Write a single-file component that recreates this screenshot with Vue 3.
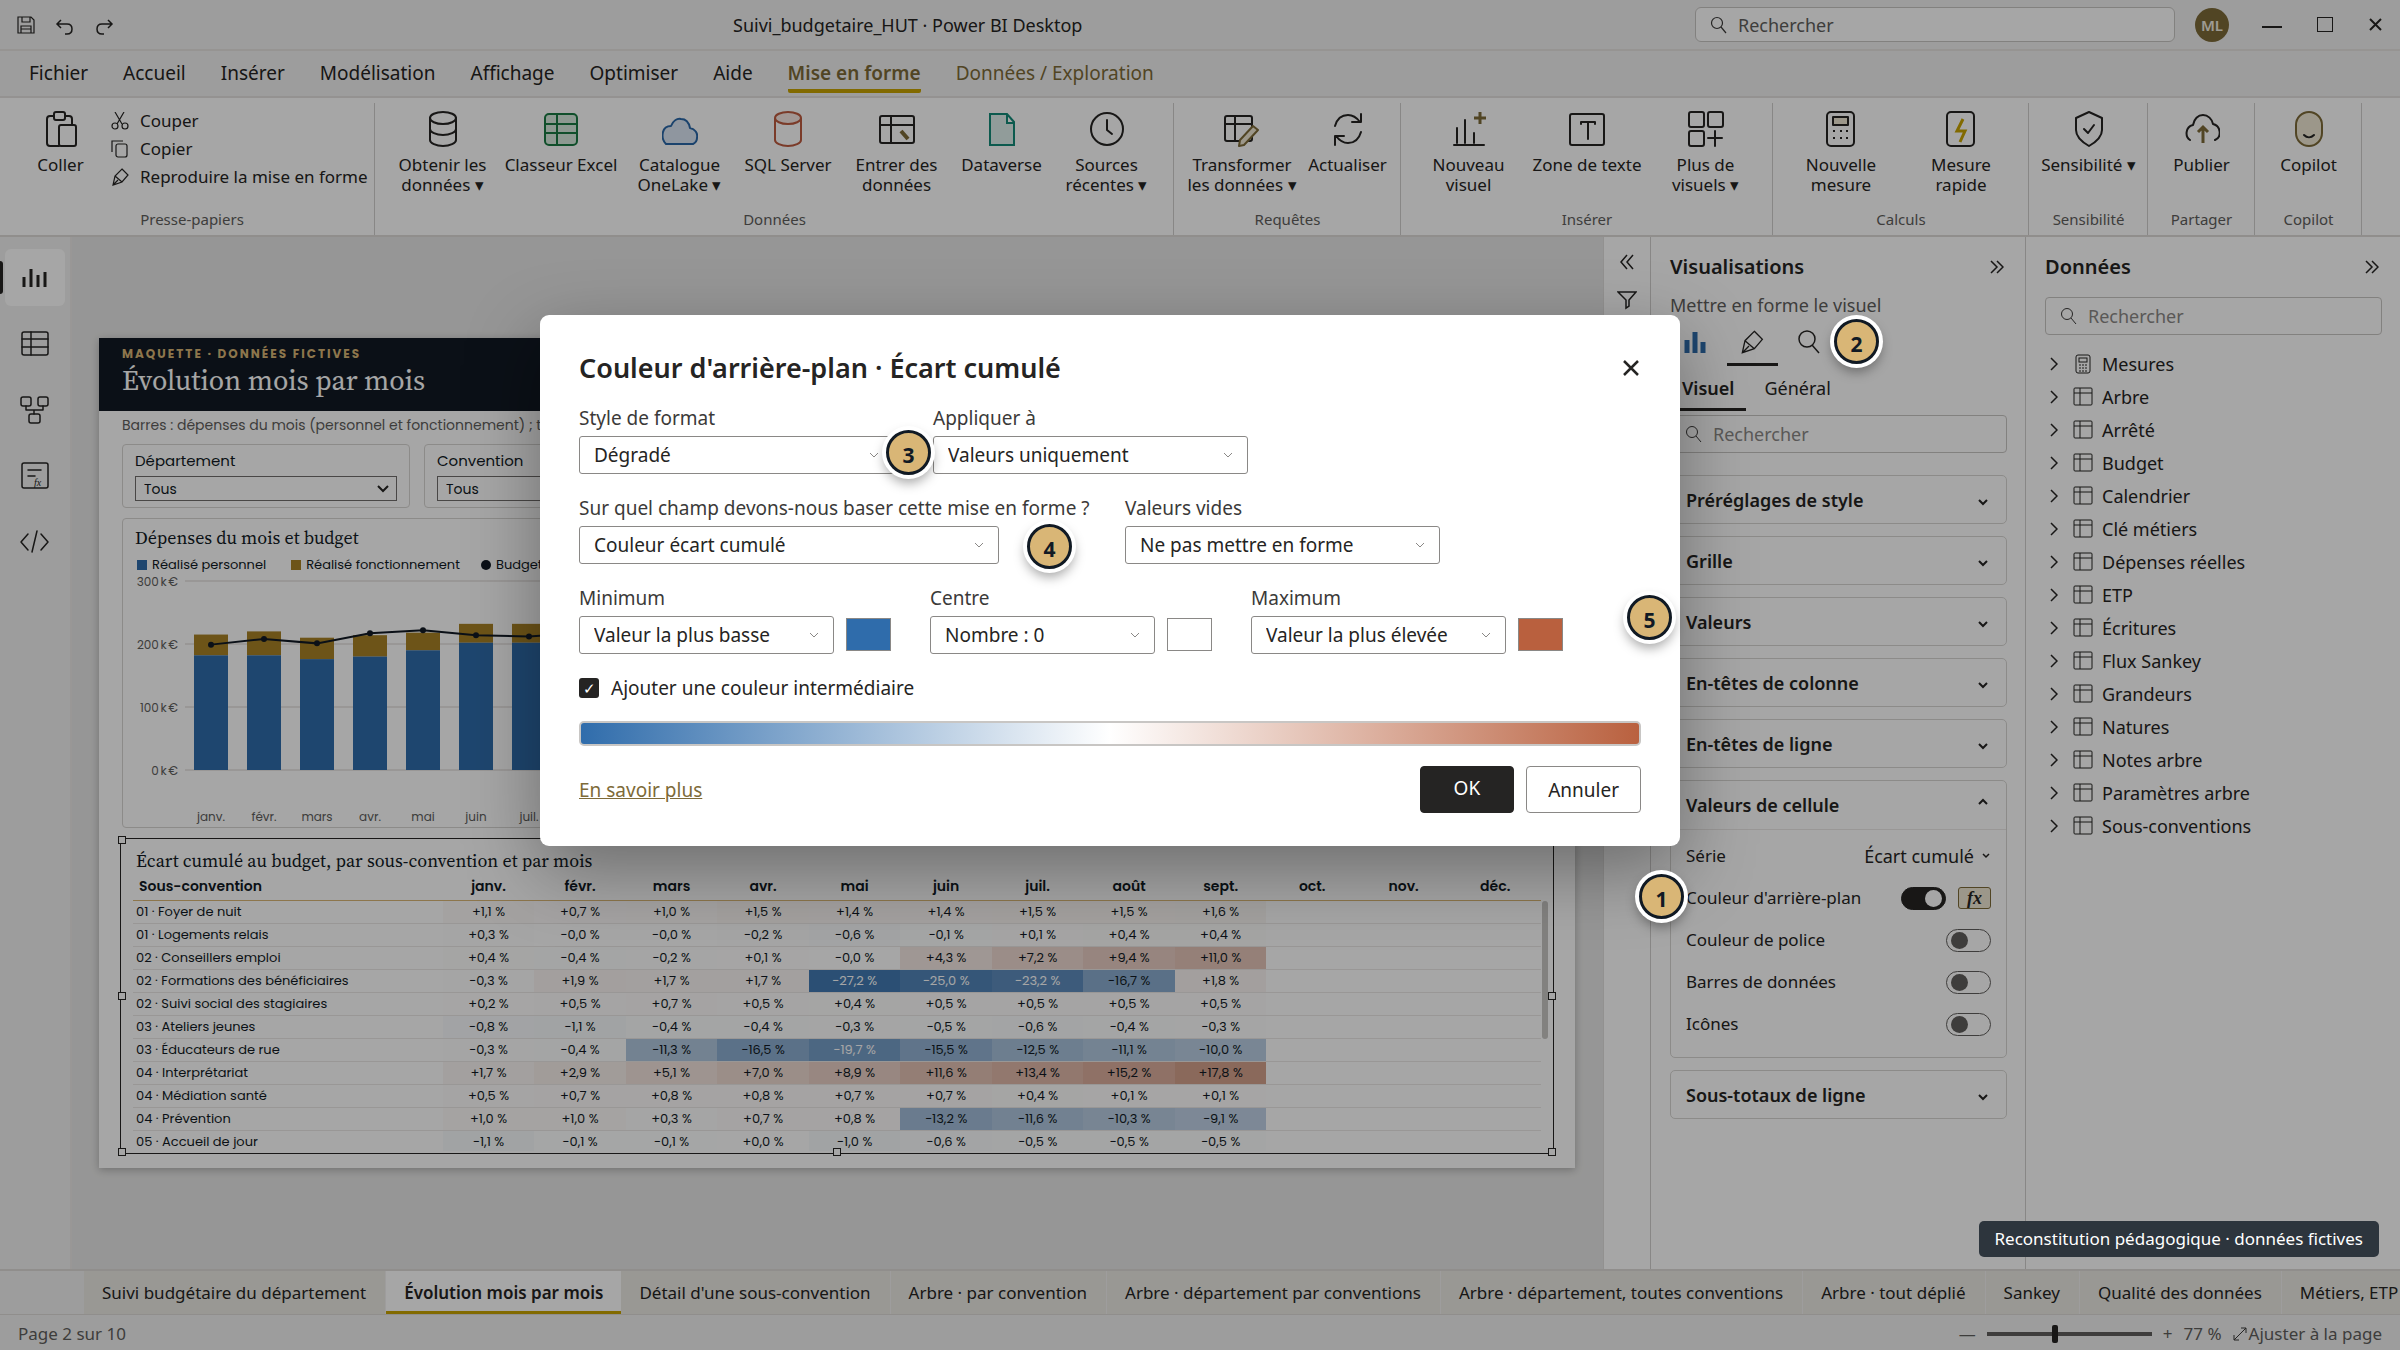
<script setup>
const menus = ['Fichier', 'Accueil', 'Insérer', 'Modélisation', 'Affichage', 'Optimiser', 'Aide']

const ink = 'stroke="#252423" stroke-width="2" fill="none" stroke-linejoin="round" stroke-linecap="round"'
const tableGlyph = `<g ${ink}><rect x="1" y="5" width="34" height="27" rx="2"/><path d="M1 14h34M12 5v27"/></g>`
const icons = {
  paste: `<g ${ink}><path d="M11 5H7a3 3 0 0 0-3 3v24a3 3 0 0 0 3 3h9M22 5h4a3 3 0 0 1 3 3v6"/><rect x="11" y="1" width="11" height="8" rx="2"/><rect x="16" y="14" width="17" height="21" rx="2"/></g>`,
  db: `<g ${ink}><ellipse cx="18" cy="7" rx="13" ry="6"/><path d="M5 7v22c0 3 6 6 13 6s13-3 13-6V7M5 18c0 3 6 6 13 6s13-3 13-6"/></g>`,
  excel: `<g stroke="#1a7a42" stroke-width="2" fill="none"><rect x="2" y="3" width="32" height="31" rx="4" fill="#d9ecdf"/><path d="M2 13h32M2 22h32M14 3v31"/></g>`,
  lake: `<path d="M5 33c-3-3-4-8-3-12s4-6 8-6c2-5 6-8 10-7 5 0 8 4 9 9 5 1 8 5 7 10 0 3-2 5-4 6z" transform="translate(-1 0)" stroke="#2a67a8" stroke-width="2" fill="#dce7f4" stroke-linejoin="round"/>`,
  sql: `<g stroke="#bd5b3f" stroke-width="2" fill="none"><path d="M5 7v22c0 3 6 6 13 6s13-3 13-6V7"/><ellipse cx="18" cy="7" rx="13" ry="6" fill="#f8e9e4"/></g>`,
  enter: `${tableGlyph}<path d="M22 20l7 8" stroke="#7d6a38" stroke-width="4"/>`,
  dataverse: `<path d="M6 3h17l7 8v23H6zM23 3v9h7" stroke="#138a78" stroke-width="2" fill="#dff0ed"/>`,
  clock: `<g ${ink}><circle cx="18" cy="18" r="16"/><path d="M18 9v10l5 4"/></g>`,
  transform: `<g ${ink}><rect x="1" y="5" width="27" height="25" rx="2"/><path d="M1 13h27M11 5v25"/></g><path d="M29 15l5 4-14 15-5 1 1-6z" stroke="#7d6a38" stroke-width="2" fill="#f0e9d4" stroke-linejoin="round"/>`,
  refresh: `<g ${ink}><path d="M5 15C7 8 12 4 18 4c5 0 9 3 12 7M31 3v8h-9M31 21c-2 7-7 11-13 11-5 0-9-3-12-7M5 34v-9h9"/></g>`,
  visual: `<g ${ink} stroke-linecap="butt"><path d="M3 34h30M6 17v15M14 9v23M23 22v10"/></g><path d="M29 1v12M23 7h12" stroke="#7d6a38" stroke-width="3"/>`,
  text: `<g ${ink}><rect x="1" y="3" width="34" height="31" rx="2"/><path d="M12 11h14M19 11v17M12 11v2M26 11v2"/></g>`,
  more: `<g ${ink}><rect x="1" y="1" width="15" height="15" rx="2"/><rect x="20" y="1" width="15" height="15" rx="2"/><rect x="1" y="20" width="15" height="15" rx="2"/><path d="M27 20v15M20 27h14"/></g>`,
  calc: `<g ${ink}><rect x="4" y="1" width="27" height="34" rx="4"/><rect x="10" y="6" width="15" height="8" fill="#f0e9d4"/></g><g fill="#252423"><path d="M10 19h2v2h-2zM17 19h2v2h-2zM23 19h2v2h-2zM10 26h2v2h-2zM17 26h2v2h-2zM23 26h2v2h-2z"/></g>`,
  quick: `<g ${ink}><rect x="4" y="1" width="27" height="34" rx="4"/></g><path d="M20 8l-6 12h8l-5 11" stroke="#c8a400" stroke-width="3" fill="none"/>`,
  shield: `<g ${ink}><path d="M18 1l13 6v12c0 7-6 12-13 16C11 31 5 26 5 19V7z"/><path d="M13 18l4 4 6-8"/></g>`,
  publish: `<g ${ink}><path d="M6 29c-5-3-5-13 3-15 1-6 5-10 10-10s9 4 10 9c8 2 9 13 2 16"/></g><path d="M19 32V16M14 21l5-5 5 5" stroke="#7d6a38" stroke-width="3" fill="none"/>`,
  copilot: `<rect x="5" y="1" width="26" height="34" rx="13" fill="#f0e9d4" stroke="#7d6a38" stroke-width="2"/><path d="M13 24c3 3 7 3 10 0" stroke="#252423" stroke-width="2" fill="none" stroke-linecap="round"/>`,
}

const groups = [
  { name: 'Données', items: [
    ['db', 'Obtenir les', 'données ▾'], ['excel', 'Classeur Excel', '', 'wide'], ['lake', 'Catalogue', 'OneLake ▾'],
    ['sql', 'SQL Server', '', 'mid'], ['enter', 'Entrer des', 'données'], ['dataverse', 'Dataverse', ''], ['clock', 'Sources', 'récentes ▾']] },
  { name: 'Requêtes', tight: true, items: [['transform', 'Transformer', 'les données ▾', 'large'], ['refresh', 'Actualiser', '', 'small']] },
  { name: 'Insérer', items: [['visual', 'Nouveau', 'visuel'], ['text', 'Zone de texte', '', 'wide'], ['more', 'Plus de', 'visuels ▾']] },
  { name: 'Calculs', tight: true, items: [['calc', 'Nouvelle', 'mesure', 'large'], ['quick', 'Mesure', 'rapide', 'large']] },
  { name: 'Sensibilité', tight: true, items: [['shield', 'Sensibilité ▾', '', 'fit']] },
  { name: 'Partager', tight: true, items: [['publish', 'Publier', '', 'small']] },
  { name: 'Copilot', tight: true, items: [['copilot', 'Copilot', '', 'small']] },
]

const thin = 'stroke="#252423" stroke-width="1.5" fill="none" stroke-linejoin="round" stroke-linecap="round"'
const rail = [
  ['Rapport', `<path d="M4 14v10M11 6v18M18 12v12M25 9v15" stroke="#252423" stroke-width="3"/>`],
  ['Table', `<g ${thin}><rect x="2" y="3" width="26" height="23" rx="2"/><path d="M2 10h26M2 18h26M11 3v23"/></g>`],
  ['Modèle', `<g ${thin}><rect x="1" y="2" width="10" height="9" rx="2"/><rect x="18" y="2" width="10" height="9" rx="2"/><rect x="9" y="19" width="11" height="9" rx="2"/><path d="M6 11v4h17v-4M14 15v4"/></g>`],
  ['DAX', `<g ${thin}><rect x="2" y="2" width="26" height="25" rx="2"/><path d="M8 9h13M8 15h7"/></g><text x="14" y="25" font-family="Liberation Serif" font-style="italic" font-size="10" fill="#252423">fx</text>`],
  ['TMDL', `<g ${thin}><path d="M8 7L1 15l7 8M21 7l7 8-7 8M17 4l-5 21"/></g>`],
]

const months = ['janv.', 'févr.', 'mars', 'avr.', 'mai', 'juin', 'juil.', 'août', 'sept.', 'oct.', 'nov.', 'déc.']
const staff = [182, 182, 176, 180, 190, 202, 202, 200, 198]
const total = [215, 220, 210, 214, 218, 232, 232, 226, 224]
const budget = [199, 208, 201, 217, 222, 214, 212, 218, 216]
const yOf = (v) => 198 - v * 0.63
const xOf = (i) => 76 + i * 53
const budgetLine = budget.map((v, i) => `${xOf(i)},${yOf(v)}`).join(' ')

const rows = [
  ['01 · Foyer de nuit', '+1,1 +0,7 +1,0 +1,5 +1,4 +1,4 +1,5 +1,5 +1,6'],
  ['01 · Logements relais', '+0,3 −0,0 −0,0 −0,2 −0,6 −0,1 +0,1 +0,4 +0,4'],
  ['02 · Conseillers emploi', '+0,4 −0,4 −0,2 +0,1 −0,0 +4,3 +7,2 +9,4 +11,0'],
  ['02 · Formations des bénéficiaires', '−0,3 +1,9 +1,7 +1,7 −27,2 −25,0 −23,2 −16,7 +1,8'],
  ['02 · Suivi social des stagiaires', '+0,2 +0,5 +0,7 +0,5 +0,4 +0,5 +0,5 +0,5 +0,5'],
  ['03 · Ateliers jeunes', '−0,8 −1,1 −0,4 −0,4 −0,3 −0,5 −0,6 −0,4 −0,3'],
  ['03 · Éducateurs de rue', '−0,3 −0,4 −11,3 −16,5 −19,7 −15,5 −12,5 −11,1 −10,0'],
  ['04 · Interprétariat', '+1,7 +2,9 +5,1 +7,0 +8,9 +11,6 +13,4 +15,2 +17,8'],
  ['04 · Médiation santé', '+0,5 +0,7 +0,8 +0,8 +0,7 +0,7 +0,4 +0,1 +0,1'],
  ['04 · Prévention', '+1,0 +1,0 +0,3 +0,7 +0,8 −13,2 −11,6 −10,3 −9,1'],
  ['05 · Accueil de jour', '−1,1 −0,1 −0,1 +0,0 −1,0 −0,6 −0,5 −0,5 −0,5'],
].map(([name, v]) => ({ name, cells: v.split(' ').map((t) => ({ text: t + ' %', value: parseFloat(t.replace('−', '-').replace(',', '.')) })) }))

const low = [47, 108, 171]
const high = [185, 96, 62]
function cellStyle(v) {
  const end = v < 0 ? low : high
  const f = Math.min(1, Math.abs(v) / 30)
  return { background: `rgb(${end.map((c) => Math.round(255 + (c - 255) * f)).join(',')})`, color: v < -18 ? '#fff' : '#111a24' }
}

const sections = ['Préréglages de style', 'Grille', 'Valeurs', 'En-têtes de colonne', 'En-têtes de ligne']
const switches = ['Couleur de police', 'Barres de données', 'Icônes']
const tables = ['Mesures', 'Arbre', 'Arrêté', 'Budget', 'Calendrier', 'Clé métiers', 'Dépenses réelles', 'ETP', 'Écritures', 'Flux Sankey', 'Grandeurs', 'Natures', 'Notes arbre', 'Paramètres arbre', 'Sous-conventions']
const pages = ['Suivi budgétaire du département', 'Évolution mois par mois', "Détail d'une sous-convention", 'Arbre · par convention', 'Arbre · département par conventions', 'Arbre · département, toutes conventions', 'Arbre · tout déplié', 'Sankey', 'Qualité des données', 'Métiers, ETP']
const pins = [
  { n: 1, x: 1662, y: 897 }, { n: 2, x: 1857, y: 342 }, { n: 3, x: 909, y: 453 }, { n: 4, x: 1050, y: 547 }, { n: 5, x: 1650, y: 618 },
]
</script>

<template>
  <div class="app">
    <header class="titlebar">
      <div class="quick">
        <button type="button" aria-label="Enregistrer"><svg width="20" height="20" viewBox="0 0 20 20" fill="none" stroke="#252423" stroke-width="1.2"><path d="M2 2h13l3 3v13H2zM6 2v5h8V2M5 18v-7h10v7M5 14h10" /></svg></button>
        <button type="button" aria-label="Annuler la saisie"><svg width="20" height="20" viewBox="0 0 20 20" fill="none" stroke="#252423" stroke-width="1.5"><path d="M6 5L2 9l4 4M2 9h10c3 0 5 2 5 5s-2 5-5 5h-2" /></svg></button>
        <button type="button" aria-label="Rétablir"><svg width="20" height="20" viewBox="0 0 20 20" fill="none" stroke="#252423" stroke-width="1.5"><path d="M14 5l4 4-4 4M18 9H8c-3 0-5 2-5 5s2 5 5 5h2" /></svg></button>
      </div>
      <div class="doc">Suivi_budgetaire_HUT · Power BI Desktop</div>
      <div class="window">
        <label class="search top"><svg width="18" height="18" viewBox="0 0 18 18" fill="none" stroke="#3b3a39" stroke-width="1.2"><circle cx="7" cy="7" r="5.5" /><path d="M11 11l5 6" /></svg><input type="search" placeholder="Rechercher" aria-label="Rechercher" /></label>
        <span class="avatar">ML</span>
        <button type="button" aria-label="Réduire"><svg width="20" height="20"><path d="M0 12h20" stroke="#252423" stroke-width="2" /></svg></button>
        <button type="button" aria-label="Agrandir"><svg width="18" height="18"><rect x="1.5" y="1.5" width="15" height="14" fill="none" stroke="#252423" /></svg></button>
        <button type="button" aria-label="Quitter"><svg width="16" height="16"><path d="M2 2l11 11M13 2L2 13" stroke="#252423" stroke-width="2" /></svg></button>
      </div>
    </header>

    <nav class="menu">
      <a v-for="m in menus" :key="m" href="#">{{ m }}</a>
      <a href="#" class="context on">Mise en forme</a>
      <a href="#" class="context">Données / Exploration</a>
    </nav>

    <section class="ribbon">
      <div class="group clipboard">
        <div class="tools">
          <button type="button" class="tool paste"><svg width="36" height="36" viewBox="0 0 36 36" v-html="icons.paste"></svg><span>Coller</span></button>
          <div class="stack">
            <button type="button"><svg width="18" height="18" viewBox="0 0 18 18" fill="none" stroke="#252423" stroke-width="1.2"><path d="M4 0l7 12M13 0L6 12" /><circle cx="4" cy="14" r="3" /><circle cx="14" cy="14" r="3" /></svg>Couper</button>
            <button type="button"><svg width="18" height="18" viewBox="0 0 18 18" fill="none" stroke="#252423" stroke-width="1.2"><path d="M1 12V1h11" /><rect x="5" y="4" width="11" height="13" rx="2" /></svg>Copier</button>
            <button type="button"><svg width="18" height="18" viewBox="0 0 18 18" fill="none" stroke="#252423" stroke-width="1.2"><path d="M11 1l6 6-6 7-9 3L4 8zM2 17l5-5M4 8l7 6" /></svg>Reproduire la mise en forme</button>
          </div>
        </div>
        <div class="caption">Presse-papiers</div>
      </div>
      <div v-for="g in groups" :key="g.name" class="group" :class="{ tight: g.tight }">
        <div class="tools">
          <button v-for="t in g.items" :key="t[1]" type="button" class="tool" :class="t[3]">
            <svg width="36" height="36" viewBox="0 0 36 36" v-html="icons[t[0]]"></svg>
            <span>{{ t[1] }}</span><span v-if="t[2]">{{ t[2] }}</span>
          </button>
        </div>
        <div class="caption">{{ g.name }}</div>
      </div>
    </section>

    <main class="work">
      <nav class="rail">
        <button v-for="(r, i) in rail" :key="r[0]" type="button" :class="{ on: i === 0 }" :aria-label="r[0]"><svg width="30" height="30" viewBox="0 0 30 30" v-html="r[1]"></svg></button>
      </nav>

      <div class="canvas">
        <article class="report">
          <header class="band">
            <div class="eyebrow">MAQUETTE · DONNÉES FICTIVES</div>
            <h1>Évolution mois par mois</h1>
          </header>
          <div class="content">
            <p class="sub">Barres : dépenses du mois (personnel et fonctionnement) ; trait</p>
            <div class="slicers">
              <label v-for="s in ['Département', 'Convention']" :key="s" class="slicer">{{ s }}
                <span class="pick"><select><option>Tous</option></select><svg width="12" height="8" viewBox="0 0 12 8"><path d="M1 1l5 5 5-5" fill="none" stroke="#252423" stroke-width="2" /></svg></span>
              </label>
            </div>
            <section class="chart">
              <h2>Dépenses du mois et budget</h2>
              <div class="legend"><span class="k blue"></span>Réalisé personnel<span class="k gold"></span>Réalisé fonctionnement<span class="k dot"></span>Budget</div>
              <svg class="plot" width="686" height="254">
                <g v-for="t in [300, 200, 100, 0]" :key="t">
                  <path :d="`M50 ${yOf(t)}H686`" stroke="#ebe9e6" stroke-width="2" />
                  <text x="43" :y="yOf(t) + 5" text-anchor="end">{{ t }}&#8239;k&#8239;€</text>
                </g>
                <g v-for="(v, i) in staff" :key="i">
                  <rect :x="xOf(i) - 17" :y="yOf(total[i])" width="34" :height="(total[i] - v) * 0.63" fill="#a88226" />
                  <rect :x="xOf(i) - 17" :y="yOf(v)" width="34" :height="v * 0.63" fill="#2f6cab" />
                </g>
                <polyline :points="budgetLine" fill="none" stroke="#111a24" stroke-width="2" />
                <circle v-for="(v, i) in budget" :key="'c' + i" :cx="xOf(i)" :cy="yOf(v)" r="3" fill="#111a24" />
                <text v-for="(m, i) in months" :key="m" :x="xOf(i)" y="249" text-anchor="middle">{{ m }}</text>
              </svg>
            </section>
            <section class="matrix">
              <div class="clip">
                <h2>Écart cumulé au budget, par sous-convention et par mois</h2>
                <table>
                  <thead><tr><th scope="col">Sous-convention</th><th v-for="m in months" :key="m" scope="col">{{ m }}</th></tr></thead>
                  <tbody>
                    <tr v-for="r in rows" :key="r.name">
                      <th scope="row">{{ r.name }}</th>
                      <td v-for="(c, i) in r.cells" :key="i" :style="cellStyle(c.value)">{{ c.text }}</td>
                      <td v-for="n in 3" :key="'e' + n"></td>
                    </tr>
                  </tbody>
                </table>
              </div>
              <i class="thumb"></i>
              <i v-for="h in ['tl', 'ml', 'bl', 'bc', 'br', 'mr']" :key="h" class="handle" :class="h"></i>
            </section>
          </div>
        </article>
      </div>

      <aside class="filters">
        <svg width="14" height="16" viewBox="0 0 14 16" fill="none" stroke="#252423" stroke-width="1.5"><path d="M7 1L1 8l6 7M13 1L7 8l6 7" /></svg>
        <svg width="20" height="20" viewBox="0 0 20 20" fill="none" stroke="#252423" stroke-width="1.5"><path d="M1 2h18l-7 8v6l-3 2v-8z" /></svg>
      </aside>

      <aside class="pane">
        <div class="head"><h3>Visualisations</h3><svg width="14" height="14" viewBox="0 0 14 14" fill="none" stroke="#252423" stroke-width="1.5"><path d="M1 1l6 6-6 6M7 1l6 6-6 6" /></svg></div>
        <p class="hint">Mettre en forme le visuel</p>
        <div class="modes">
          <button type="button" aria-label="Champs"><svg width="24" height="24"><path d="M3 10v13M11 2v21M19 12v11" stroke="#2f6cab" stroke-width="5" /></svg></button>
          <button type="button" class="on" aria-label="Format"><svg width="24" height="24" viewBox="0 0 18 18" fill="none" stroke="#252423" stroke-width="1"><path d="M10 1l6 6-6 7-9 3L3 8zM1 17l5-5M3 8l7 6" /></svg></button>
          <button type="button" aria-label="Analyse"><svg width="24" height="24" viewBox="0 0 24 24" fill="none" stroke="#252423" stroke-width="1.5"><circle cx="9" cy="9" r="8" /><path d="M14 15l7 8" /></svg></button>
        </div>
        <div class="subtabs"><button type="button" class="on">Visuel</button><button type="button">Général</button></div>
        <label class="search"><svg width="18" height="18" viewBox="0 0 18 18" fill="none" stroke="#3b3a39" stroke-width="1"><circle cx="7" cy="7" r="5.5" /><path d="M11 11l5 6" /></svg><input type="search" placeholder="Rechercher" aria-label="Rechercher un paramètre" /></label>
        <div class="cards">
          <button v-for="s in sections" :key="s" type="button" class="card">{{ s }}<svg width="10" height="7"><path d="M1 1l4 4 4-4" fill="none" stroke="#252423" stroke-width="2" /></svg></button>
          <div class="open">
            <button type="button" class="card">Valeurs de cellule<svg width="10" height="7"><path d="M1 6l4-4 4 4" fill="none" stroke="#252423" stroke-width="2" /></svg></button>
            <div class="body">
              <div class="line">Série<button type="button" class="series">Écart cumulé<svg width="9" height="6"><path d="M1 1l3 3 3-3" fill="none" stroke="#252423" stroke-width="1.5" /></svg></button></div>
              <div class="line"><label for="bg">Couleur d'arrière-plan</label><input id="bg" type="checkbox" class="toggle" checked /><button type="button" class="fx">fx</button></div>
              <div v-for="(s, i) in switches" :key="s" class="line"><label :for="'sw' + i">{{ s }}</label><input :id="'sw' + i" type="checkbox" class="toggle" /></div>
            </div>
          </div>
          <button type="button" class="card">Sous-totaux de ligne<svg width="10" height="7"><path d="M1 1l4 4 4-4" fill="none" stroke="#252423" stroke-width="2" /></svg></button>
        </div>
      </aside>

      <aside class="pane data">
        <div class="head"><h3>Données</h3><svg width="14" height="14" viewBox="0 0 14 14" fill="none" stroke="#252423" stroke-width="1.5"><path d="M1 1l6 6-6 6M7 1l6 6-6 6" /></svg></div>
        <label class="search"><svg width="18" height="18" viewBox="0 0 18 18" fill="none" stroke="#3b3a39" stroke-width="1"><circle cx="7" cy="7" r="5.5" /><path d="M11 11l5 6" /></svg><input type="search" placeholder="Rechercher" aria-label="Rechercher une table" /></label>
        <ul>
          <li v-for="(t, i) in tables" :key="t">
            <svg width="8" height="14" viewBox="0 0 8 14"><path d="M1 1l6 6-6 6" fill="none" stroke="#252423" stroke-width="1.5" /></svg>
            <svg v-if="i === 0" width="20" height="20" viewBox="0 0 20 20" fill="none" stroke="#252423"><rect x="3" y="1" width="14" height="18" rx="2" /><rect x="6" y="4" width="8" height="4" /><path d="M6 11h8M6 14h8M6 17h8" stroke-dasharray="2 1" /></svg>
            <svg v-else width="20" height="20" viewBox="0 0 20 20" fill="none" stroke="#252423"><rect x="1" y="1" width="18" height="17" rx="1" /><path d="M1 6h18M7 1v17" /></svg>
            {{ t }}
          </li>
        </ul>
      </aside>
    </main>

    <nav class="pages"><a v-for="(p, i) in pages" :key="p" href="#" :class="{ on: i === 1 }">{{ p }}</a></nav>
    <footer class="status">
      <span>Page 2 sur 10</span>
      <div class="zoom"><span>—</span><input type="range" min="0" max="100" value="41" aria-label="Zoom" /><span>+</span><span>77 %</span><button type="button"><svg width="14" height="14" viewBox="0 0 14 14" fill="none" stroke="#3b3a39"><path d="M1 13L13 1M8 1h5v5M1 8v5h5" /></svg>Ajuster à la page</button></div>
    </footer>

    <div class="scrim"></div>
    <form class="dialog" role="dialog" aria-labelledby="dlg" @submit.prevent>
      <div class="dhead"><h2 id="dlg">Couleur d'arrière-plan · Écart cumulé</h2><button type="button" aria-label="Fermer"><svg width="20" height="18"><path d="M3 2l14 14M17 2L3 16" stroke="#252423" stroke-width="2.5" /></svg></button></div>
      <div class="fields">
        <label class="field m">Style de format<span class="pick"><select><option>Dégradé</option></select><svg width="10" height="6"><path d="M1 1l4 4 4-4" fill="none" stroke="#8a8886" /></svg></span></label>
        <label class="field m">Appliquer à<span class="pick"><select><option>Valeurs uniquement</option></select><svg width="10" height="6"><path d="M1 1l4 4 4-4" fill="none" stroke="#8a8886" /></svg></span></label>
      </div>
      <div class="fields">
        <label class="field l">Sur quel champ devons-nous baser cette mise en forme ?<span class="pick"><select><option>Couleur écart cumulé</option></select><svg width="10" height="6"><path d="M1 1l4 4 4-4" fill="none" stroke="#8a8886" /></svg></span></label>
        <label class="field m">Valeurs vides<span class="pick"><select><option>Ne pas mettre en forme</option></select><svg width="10" height="6"><path d="M1 1l4 4 4-4" fill="none" stroke="#8a8886" /></svg></span></label>
      </div>
      <div class="fields">
        <div class="pair"><label class="field s">Minimum<span class="pick"><select><option>Valeur la plus basse</option></select><svg width="10" height="6"><path d="M1 1l4 4 4-4" fill="none" stroke="#8a8886" /></svg></span></label><button type="button" class="swatch blue" aria-label="Couleur minimum"></button></div>
        <div class="pair"><label class="field xs">Centre<span class="pick"><select><option>Nombre : 0</option></select><svg width="10" height="6"><path d="M1 1l4 4 4-4" fill="none" stroke="#8a8886" /></svg></span></label><button type="button" class="swatch" aria-label="Couleur centre"></button></div>
        <div class="pair"><label class="field s">Maximum<span class="pick"><select><option>Valeur la plus élevée</option></select><svg width="10" height="6"><path d="M1 1l4 4 4-4" fill="none" stroke="#8a8886" /></svg></span></label><button type="button" class="swatch red" aria-label="Couleur maximum"></button></div>
      </div>
      <label class="check"><input type="checkbox" checked />Ajouter une couleur intermédiaire</label>
      <div class="gradient"></div>
      <div class="dfoot"><a href="#">En savoir plus</a><button type="submit" class="ok">OK</button><button type="button">Annuler</button></div>
    </form>

    <span v-for="p in pins" :key="p.n" class="pin" :style="{ left: p.x + 'px', top: p.y + 'px' }">{{ p.n }}</span>
    <div class="notice">Reconstitution pédagogique · données fictives</div>
  </div>
</template>

<style>
html, body, #app { height: 100%; margin: 0; }
</style>

<style scoped>
* { box-sizing: border-box; }
.app { position: relative; display: flex; flex-direction: column; height: 100%; overflow: hidden; background: #f2f2f1; color: #252423; font: 18px/24px "Noto Sans", sans-serif; }
button, input, select { font: inherit; color: inherit; margin: 0; }
button { background: none; border: 0; padding: 0; }
svg { display: block; flex: none; }
h1, h2, h3, p, ul { margin: 0; padding: 0; font-weight: 400; }
a { color: inherit; text-decoration: none; }

.titlebar { display: grid; grid-template-columns: 717px 1fr auto; align-items: center; height: 51px; border-bottom: 2px solid #e6e4e1; padding: 0 16px; }
.quick { display: flex; gap: 19px; }
.window { display: flex; align-items: center; }
.search { display: flex; align-items: center; height: 38px; border: 1px solid #c8c6c4; border-radius: 4px; background: #fff; padding: 0 14px; }
.search input { flex: 1; min-width: 0; border: 0; background: none; padding: 0 0 0 10px; outline: 0; }
.search input::placeholder { color: #8a8886; opacity: 1; }
.search.top { width: 480px; height: 35px; border-radius: 6px; }
.search.top input::placeholder { color: #605e5c; }
.avatar { display: grid; place-items: center; width: 34px; height: 34px; margin: 0 33px 0 20px; border-radius: 50%; background: #7d6a38; color: #f3efe2; font-size: 15px; font-weight: 600; }
.window button + button { margin-left: 34px; }

.menu { display: flex; height: 47px; gap: 35px; padding: 0 29px; border-bottom: 2px solid #e3e1df; font-size: 19px; }
.menu a { height: 42px; line-height: 44px; }
.menu .context { color: #7d6a38; }
.menu .on { font-weight: 600; border-bottom: 4px solid #c8a400; border-radius: 2px; }

.ribbon { display: flex; height: 139px; padding: 5px 0 0; border-bottom: 2px solid #dddbd8; background: #fff; font-size: 17px; line-height: 20px; }
.group { display: flex; flex-direction: column; justify-content: space-between; padding: 8px 14px 4px 15px; border-right: 1px solid #d2d0ce; }
.group.tight { padding-left: 8px; padding-right: 7px; }
.tools { display: flex; }
.tool { display: flex; flex-direction: column; align-items: center; width: 105px; white-space: nowrap; }
.tool svg { margin-bottom: 8px; }
.wide { width: 132px; } .mid { width: 112px; } .large { width: 120px; } .small { width: 91px; } .fit { width: 103px; }
.caption { text-align: center; color: #605e5c; font-size: 15px; line-height: 24px; }
.group.clipboard { width: 375px; padding: 8px 0 4px 10px; }
.paste { flex: none; width: 101px; }
.stack { display: flex; flex-direction: column; gap: 3px; margin-top: -3px; }
.stack button { display: flex; align-items: center; gap: 11px; height: 25px; white-space: nowrap; }

.work { flex: 1; min-height: 0; display: flex; }
.rail { width: 72px; border-right: 2px solid #ebe9e7; display: flex; flex-direction: column; align-items: center; gap: 9px; padding: 12px 0; }
.rail button { width: 60px; height: 57px; display: grid; place-items: center; border-radius: 6px; }
.rail .on { background: #fff; position: relative; }
.rail .on::before { content: ""; position: absolute; left: -6px; top: 12px; width: 4px; height: 33px; background: #252423; border-radius: 0 3px 3px 0; }
.canvas { flex: 1; min-width: 0; display: flex; align-items: center; padding: 0 28px 0 27px; background: #e7e7e6; }
.report { width: 100%; aspect-ratio: 16 / 9; display: flex; flex-direction: column; background: #fff; box-shadow: 0 2px 8px rgba(0, 0, 0, .25); color: #111a24; font-family: Poppins, Inter, sans-serif; }
.band { height: 73px; padding: 6px 23px; background: #111a24; }
.eyebrow { color: #d9b676; font-size: 12px; line-height: 20px; font-weight: 700; letter-spacing: 2px; }
.band h1 { color: #fff; font: 28px/32px "Source Serif 4", "Liberation Serif", serif; }
.content { flex: 1; min-height: 0; display: flex; flex-direction: column; gap: 10px; padding: 4px 21px 14px 23px; }
.sub { height: 19px; color: #605e5c; font-size: 14px; line-height: 20px; white-space: nowrap; }
.slicers { display: flex; gap: 14px; }
.slicer { width: 288px; height: 64px; padding: 4px 12px; border: 1px solid #d8d6d3; border-radius: 4px; font-size: 15px; line-height: 24px; }
.pick { position: relative; display: block; }
.pick select { appearance: none; display: block; width: 100%; height: 38px; padding: 0 14px; border: 1px solid #8a8886; border-radius: 3px; background: #fff; outline: 0; }
.pick svg { position: absolute; right: 15px; top: 16px; }
.slicer .pick { margin-top: 3px; }
.slicer select { height: 25px; padding: 0 8px; border-radius: 0; font-size: 14px; border-color: #706e6c; }
.slicer .pick svg { right: 8px; top: 9px; }
.chart { width: 709px; height: 310px; border: 1px solid #d8d6d3; border-radius: 4px; padding: 5px 10px 0 12px; }
.report h2 { font: 18px/28px "Source Serif 4", "Liberation Serif", serif; }
.legend { display: flex; align-items: center; height: 26px; padding-left: 2px; font-size: 13px; }
.k { width: 10px; height: 10px; margin: 0 5px 0 25px; }
.k.blue { margin-left: 0; } .blue { background: #2f6cab; } .gold { background: #a88226; } .dot { background: #111a24; border-radius: 50%; margin-left: 21px; }
.plot { margin-top: -6px; }
.plot text { font-size: 12px; fill: #605e5c; }
.matrix { position: relative; flex: 1; min-height: 0; margin-left: -2px; border: 1px solid #252423; padding: 8px 12px 2px 12px; }
.clip { height: 100%; overflow: hidden; }
.matrix h2 { padding-left: 3px; }
table { width: 100%; table-layout: fixed; border-collapse: collapse; font-size: 13px; }
th:first-child { width: 22%; text-align: left; }
thead th { height: 26px; padding: 0 0 3px; border-bottom: 1px solid #d9b676; font-size: 14px; font-weight: 600; line-height: 20px; }
thead th:first-child { padding-left: 6px; }
tbody th { padding: 0 3px; font-weight: 400; }
tbody th, td { height: 23px; line-height: 20px; border-bottom: 1px solid #ebe9e6; white-space: nowrap; }
td { text-align: center; padding: 0; }
.thumb { position: absolute; right: 5px; top: 62px; width: 6px; height: 138px; border-radius: 3px; background: #c8c6c4; }
.handle { position: absolute; width: 8px; height: 8px; border: 1px solid #252423; background: #fff; }
.tl { left: -3px; top: -3px; } .ml { left: -3px; top: calc(50% - 4px); } .bl { left: -3px; bottom: -3px; } .bc { left: calc(50% - 4px); bottom: -3px; } .br { right: -3px; bottom: -3px; } .mr { right: -3px; top: calc(50% - 4px); }

.filters { width: 48px; display: flex; flex-direction: column; align-items: center; gap: 20px; padding-top: 17px; background: #fff; border-left: 1px solid #e1dfdd; border-right: 1px solid #d2d0ce; }
.pane { width: 375px; padding: 15px 18px 0 19px; background: #fff; border-right: 1px solid #d2d0ce; }
.data { border: 0; width: 374px; }
.head { display: flex; align-items: center; justify-content: space-between; padding-right: 3px; height: 30px; }
.head h3 { font-size: 20px; font-weight: 600; }
.hint { margin-top: 11px; color: #605e5c; }
.modes { display: flex; gap: 6px; margin-top: 6px; }
.modes button { width: 51px; height: 43px; display: grid; place-items: center; padding-bottom: 2px; border-bottom: 3px solid transparent; }
.modes .on, .subtabs .on { border-bottom-color: #252423; }
.subtabs { display: flex; gap: 6px; height: 45px; }
.subtabs button { padding: 2px 12px 0; border-bottom: 3px solid transparent; }
.subtabs .on { font-weight: 600; }
.pane .search { margin-top: 4px; }
.pane.data .search { margin-top: 15px; }
.cards { display: flex; flex-direction: column; gap: 12px; margin-top: 22px; }
.card { display: flex; align-items: center; justify-content: space-between; width: 100%; height: 49px; padding: 0 18px 0 15px; border: 1px solid #d8d6d3; border-radius: 5px; font-weight: 600; }
.card svg { margin-top: 6px; }
.open { border: 1px solid #d8d6d3; border-radius: 5px; }
.open .card { border-width: 0 0 1px; border-color: #ebe9e7; border-radius: 0; }
.open .card svg { margin-top: -8px; }
.body { padding: 5px 15px 12px; font-size: 17px; }
.line { display: flex; align-items: center; gap: 12px; height: 42px; }
.line label, .series { flex: 1; }
.series { display: flex; align-items: center; justify-content: flex-end; gap: 8px; font-size: 18px; }
.toggle { appearance: none; width: 45px; height: 23px; border: 1px solid #605e5c; border-radius: 12px; display: flex; align-items: center; padding: 0 4px; }
.toggle::after { content: ""; width: 17px; height: 17px; border-radius: 50%; background: #605e5c; }
.toggle:checked { background: #252423; border-color: #252423; justify-content: flex-end; padding: 0 3px; }
.toggle:checked::after { background: #fff; }
.fx { width: 33px; height: 22px; border: 1px solid #7d6a38; border-radius: 3px; background: #f0e9d4; font: italic 700 18px/18px "Liberation Serif", serif; }
.data ul { margin-top: 12px; list-style: none; }
.data li { display: flex; align-items: center; height: 33px; padding-left: 5px; }
.data li svg + svg { margin: 0 9px 0 15px; }

.pages { display: flex; height: 46px; padding-left: 84px; border-top: 2px solid #dddbd8; border-bottom: 1px solid #dddbd8; font-size: 17px; white-space: nowrap; overflow: hidden; }
.pages a { flex: none; padding: 0 19px 0 18px; line-height: 44px; background: #ebeae4; border-right: 1px solid #f3f2f1; }
.pages .on { padding: 0 18px; background: #fff; font-weight: 600; line-height: 43px; border-right: 0; border-bottom: 3px solid #c8a400; }
.status { display: flex; align-items: center; justify-content: space-between; height: 35px; padding: 2px 18px 0; color: #605e5c; font-size: 17px; }
.zoom { display: flex; align-items: center; gap: 11px; }
.zoom button { display: flex; align-items: center; gap: 2px; }
.zoom input { appearance: none; width: 165px; height: 4px; background: #605e5c; outline: 0; }
.zoom input::-webkit-slider-thumb { appearance: none; width: 6px; height: 18px; border-radius: 2px; background: #252423; }

.scrim { position: absolute; inset: 0; background: rgba(0, 0, 0, .35); }
.dialog { position: absolute; left: 540px; top: 315px; width: 1140px; padding: 33px 39px; border-radius: 9px; background: #fff; box-shadow: 0 24px 72px rgba(0, 0, 0, .35); font-size: 19px; }
.dhead { display: flex; align-items: center; justify-content: space-between; height: 39px; margin-bottom: 18px; }
.dhead h2 { font-size: 27px; font-weight: 600; }
.fields { display: flex; gap: 39px; height: 90px; }
.field { display: block; color: #3b3a39; line-height: 26px; white-space: nowrap; }
.field .pick { margin-top: 5px; }
.field select { color: #252423; }
.l { width: 507px; }
.m .pick { width: 315px; } .l .pick { width: 420px; } .s .pick { width: 255px; } .xs .pick { width: 225px; }
.pair { display: flex; gap: 12px; }
.swatch { width: 45px; height: 33px; margin-top: 33px; border: 1px solid #8a8886; }
.red { background: #b9603e; }
.check { display: flex; align-items: center; gap: 12px; height: 26px; }
.check input { appearance: none; width: 20px; height: 20px; display: grid; place-items: center; border-radius: 3px; background: #252423; }
.check input::after { content: "✓"; color: #fff; font-size: 15px; line-height: 20px; }
.gradient { height: 25px; margin-top: 20px; border: 2px solid #c8c6c4; border-radius: 5px; background: linear-gradient(90deg, #2f6cab, #fff 50%, #b9603e) border-box; }
.dfoot { display: flex; align-items: center; gap: 12px; margin-top: 20px; }
.dfoot a { margin-right: auto; color: #7d6a38; text-decoration: underline; }
.dfoot button { height: 47px; padding: 0 21px; border: 1px solid #8a8886; border-radius: 4px; }
.dfoot .ok { padding: 0 33px 3px; border-color: #252423; background: #252423; color: #fff; }
.pin { position: absolute; width: 45px; height: 45px; margin: -23px 0 0 -23px; padding-top: 4px; border: 3px solid #111a24; border-radius: 50%; background: #d9b676; box-shadow: 0 0 0 4px #fff, 0 6px 12px 2px rgba(0, 0, 0, .35); color: #111a24; font-size: 21px; font-weight: 700; line-height: 37px; text-align: center; }
.notice { position: absolute; right: 21px; bottom: 93px; padding: 0 16px; border-radius: 5px; background: #2d353d; color: #fff; font-size: 17px; line-height: 36px; }
</style>
